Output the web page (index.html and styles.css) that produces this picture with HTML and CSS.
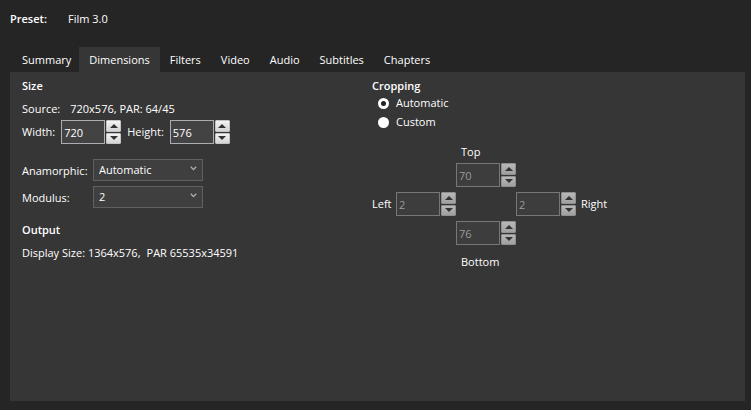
FILE: index.html
```html
<!DOCTYPE html>
<html lang="en">
<head>
    <meta charset="UTF-8">
    <meta name="viewport" content="width=device-width, initial-scale=1.0">
    <title>Dimensions</title>
    <link rel="stylesheet" href="styles.css">
</head>
<body>
    <header class="preset">
        <b class="preset-label">Preset:</b>
        <span>Film 3.0</span>
    </header>

    <nav class="tabs">
        <button type="button" class="tab">Summary</button>
        <button type="button" class="tab active">Dimensions</button>
        <button type="button" class="tab">Filters</button>
        <button type="button" class="tab">Video</button>
        <button type="button" class="tab">Audio</button>
        <button type="button" class="tab">Subtitles</button>
        <button type="button" class="tab">Chapters</button>
    </nav>

    <main class="panel">
        <section class="column">
            <h2>Size</h2>
            <div class="source"><span>Source:</span><span>720x576, PAR: 64/45</span></div>
            <div class="size-row">
                <label for="width">Width:</label>
                <div class="spinner">
                    <input type="text" id="width" value="720">
                    <div class="spin-buttons">
                        <button type="button" class="up" aria-label="Increase width"></button>
                        <button type="button" class="down" aria-label="Decrease width"></button>
                    </div>
                </div>
                <label for="height">Height:</label>
                <div class="spinner">
                    <input type="text" id="height" value="576">
                    <div class="spin-buttons">
                        <button type="button" class="up" aria-label="Increase height"></button>
                        <button type="button" class="down" aria-label="Decrease height"></button>
                    </div>
                </div>
            </div>

            <div class="options">
                <label for="anamorphic">Anamorphic:</label>
                <div class="select-box">
                    <select id="anamorphic">
                        <option>Automatic</option>
                    </select>
                    <svg class="chevron" viewBox="0 0 7 5"><path d="M0.8 0.8 L3.5 3.6 L6.2 0.8"/></svg>
                </div>
                <label for="modulus">Modulus:</label>
                <div class="select-box">
                    <select id="modulus">
                        <option>2</option>
                    </select>
                    <svg class="chevron" viewBox="0 0 7 5"><path d="M0.8 0.8 L3.5 3.6 L6.2 0.8"/></svg>
                </div>
            </div>

            <h2>Output</h2>
            <div class="display-size"><span>Display Size: 1364x576,</span><span>PAR 65535x34591</span></div>
        </section>

        <section class="column">
            <h2>Cropping</h2>
            <div class="radios">
                <label class="radio"><input type="radio" name="cropping" checked>Automatic</label>
                <label class="radio"><input type="radio" name="cropping">Custom</label>
            </div>

            <div class="crop">
                <label for="crop-top" class="top-label">Top</label>
                <div class="spinner crop-top">
                    <input type="text" id="crop-top" value="70" disabled>
                    <div class="spin-buttons">
                        <button type="button" class="up" aria-label="Increase top" disabled></button>
                        <button type="button" class="down" aria-label="Decrease top" disabled></button>
                    </div>
                </div>
                <label for="crop-left" class="left-label">Left</label>
                <div class="spinner crop-left">
                    <input type="text" id="crop-left" value="2" disabled>
                    <div class="spin-buttons">
                        <button type="button" class="up" aria-label="Increase left" disabled></button>
                        <button type="button" class="down" aria-label="Decrease left" disabled></button>
                    </div>
                </div>
                <div class="spinner crop-right">
                    <input type="text" id="crop-right" value="2" disabled>
                    <div class="spin-buttons">
                        <button type="button" class="up" aria-label="Increase right" disabled></button>
                        <button type="button" class="down" aria-label="Decrease right" disabled></button>
                    </div>
                </div>
                <label for="crop-right" class="right-label">Right</label>
                <div class="spinner crop-bottom">
                    <input type="text" id="crop-bottom" value="76" disabled>
                    <div class="spin-buttons">
                        <button type="button" class="up" aria-label="Increase bottom" disabled></button>
                        <button type="button" class="down" aria-label="Decrease bottom" disabled></button>
                    </div>
                </div>
                <label for="crop-bottom" class="bottom-label">Bottom</label>
            </div>
        </section>
    </main>
</body>
</html>
```

FILE: styles.css
```css
* {
    box-sizing: border-box;
}

body {
    margin: 0;
    padding: 11px 6px 9px 10px;
    min-height: 100vh;
    display: flex;
    flex-direction: column;
    background-color: #252525;
    color: #fff;
    font-family: "Open Sans", "Noto Sans", sans-serif;
    font-size: 11px;
    line-height: 16px;
}

button, input, select {
    margin: 0;
    font: inherit;
    color: inherit;
}

h2 {
    margin: 0;
    font-size: 11px;
    font-weight: 600;
}

.preset {
    display: flex;
}

.preset-label {
    width: 58px;
    font-weight: 600;
}

.tabs {
    display: flex;
    margin-top: 20px;
    padding-left: 2px;
}

.tab {
    height: 25px;
    padding: 1px 10px 0;
    border: none;
    background: none;
    white-space: nowrap;
}

.tab:first-child {
    padding-right: 8px;
}

.tab.active {
    background-color: #363636;
}

.panel {
    flex: 1;
    display: grid;
    grid-template-columns: 350px 1fr;
    padding: 6px 12px;
    background-color: #363636;
}

.source {
    display: flex;
    gap: 10px;
    margin-top: 7px;
}

.size-row {
    display: flex;
    align-items: center;
    gap: 6px;
    margin-top: 3px;
}

.spinner {
    display: flex;
    width: 60px;
    height: 24px;
}

.spinner input {
    width: 44px;
    height: 24px;
    padding: 1px 2px 0;
    border: 1px solid #abadb3;
    background-color: #434343;
}

.spin-buttons {
    flex: 1;
    display: flex;
    flex-direction: column;
    gap: 1px;
    padding-left: 1px;
}

.spin-buttons button {
    flex: 1;
    display: flex;
    align-items: center;
    justify-content: center;
    padding: 0;
    border: 1px solid #c4c4c4;
    border-radius: 1px;
    background: linear-gradient(#f4f4f4, #d4d4d4);
}

.spin-buttons button::before {
    content: "";
    border: 4px solid transparent;
}

.spin-buttons .up::before {
    border-top: none;
    border-bottom-color: #333;
}

.spin-buttons .down::before {
    border-bottom: none;
    border-top-color: #333;
}

.spinner input:disabled {
    border-color: #777;
    background-color: #3d3d3d;
    color: #9a9a9a;
}

.spin-buttons button:disabled {
    border-color: #909090;
    background: linear-gradient(#b8b8b8, #a0a0a0);
}

.options {
    display: grid;
    grid-template-columns: 71px 110px;
    align-items: center;
    row-gap: 5px;
    margin: 15px 0 14px;
}

.options label {
    padding-top: 2px;
    white-space: nowrap;
}

.select-box {
    position: relative;
    height: 22px;
}

.select-box select {
    display: block;
    width: 100%;
    height: 22px;
    padding: 0 5px 1px;
    appearance: none;
    border: 1px solid #606060;
    border-radius: 0;
    background-color: #3f3f3f;
}

.chevron {
    position: absolute;
    top: 7px;
    right: 6px;
    width: 7px;
    height: 5px;
    fill: none;
    stroke: #b0b0b0;
    stroke-width: 1.3;
    pointer-events: none;
}

.display-size {
    display: flex;
    gap: 6px;
    margin-top: 7px;
}

.radios {
    display: flex;
    flex-direction: column;
    gap: 3px;
    margin-top: 1px;
    padding-left: 6px;
}

.radio {
    display: flex;
    align-items: center;
    gap: 7px;
}

.radio input {
    appearance: none;
    width: 11px;
    height: 11px;
    border-radius: 50%;
    background-color: #fff;
}

.radio input:checked {
    border: 3px solid #fff;
    background-color: #222;
}

.crop {
    display: grid;
    grid-template-columns: 24px 60px 60px 60px auto;
    grid-template-rows: 16px 24px 24px 24px 16px;
    row-gap: 5px;
    justify-content: start;
    align-items: center;
    margin-top: 12px;
}

.top-label, .bottom-label {
    grid-column: 3;
    padding: 4px 0 0 5px;
}

.bottom-label {
    padding-top: 8px;
}

.crop-top, .crop-bottom {
    grid-column: 3;
}

.left-label {
    grid-column: 1;
}

.crop-right {
    grid-column: 4;
}

.right-label {
    padding-left: 5px;
}
```
